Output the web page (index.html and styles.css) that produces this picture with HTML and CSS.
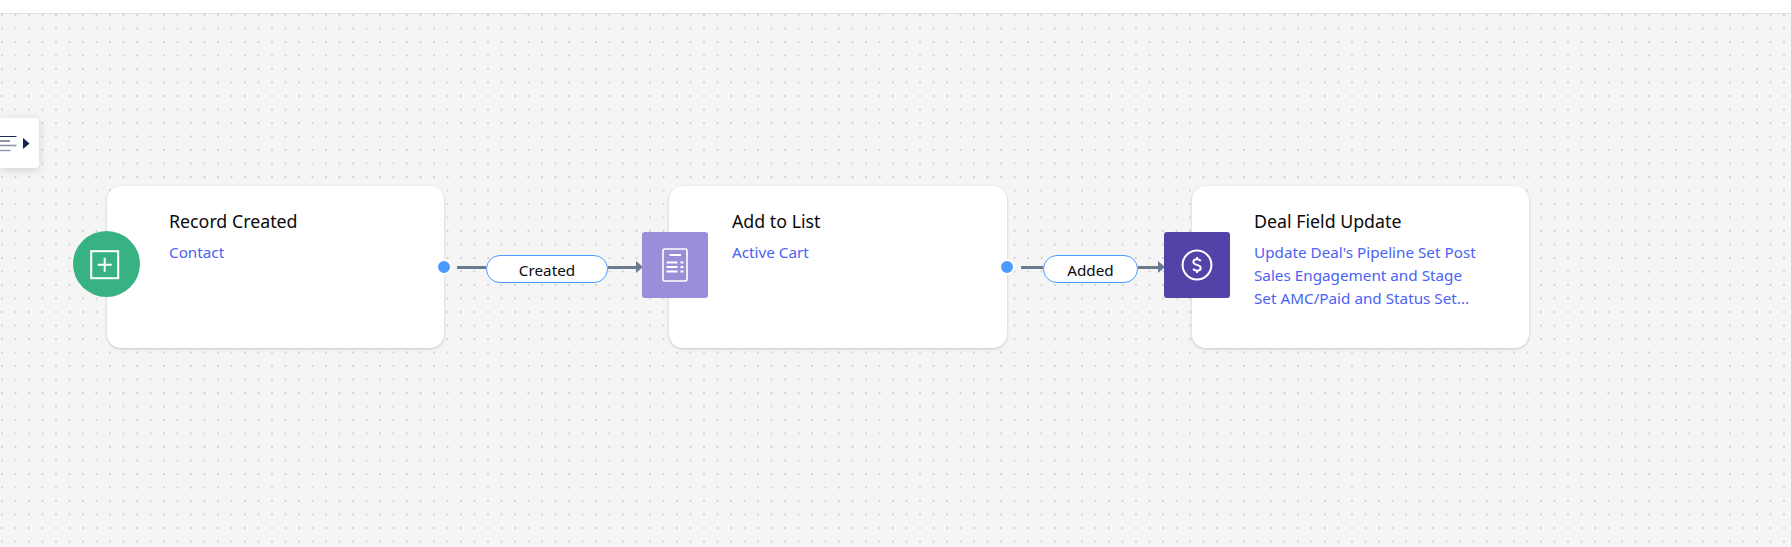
FILE: index.html
```html
<!DOCTYPE html>
<html lang="en">
<head>
<meta charset="utf-8">
<title>Workflow</title>
<link rel="stylesheet" href="styles.css">
</head>
<body>
<header class="topbar"></header>
<main class="canvas">
  <div class="toggle">
    <svg class="toggle-lines" width="17" height="18" viewBox="0 0 17 18">
      <path d="M0 1.5H16.5" stroke="#1b2a4e" stroke-width="1"/>
      <path d="M0 6H10" stroke="#1b2a4e" stroke-width="1"/>
      <path d="M0 10.5H16.5" stroke="#8c95a8" stroke-width="1.6"/>
      <path d="M0 15.5H10.5" stroke="#8c95a8" stroke-width="1.4"/>
    </svg>
    <svg class="toggle-caret" width="7" height="11" viewBox="0 0 7 11"><path d="M0 0L6.5 5.5L0 11Z" fill="#15274f"/></svg>
  </div>

  <div class="edge edge-a">
    <span class="edge-line edge-line-start"></span>
    <span class="edge-label edge-label-a">Created</span>
    <span class="edge-line"></span>
    <span class="edge-arrow"></span>
  </div>
  <div class="edge edge-b">
    <span class="edge-line edge-line-start"></span>
    <span class="edge-label edge-label-b">Added</span>
    <span class="edge-line"></span>
    <span class="edge-arrow"></span>
  </div>

  <article class="node node-a">
    <span class="badge badge-round badge-green">
      <svg class="icon-plus" width="30" height="30" viewBox="0 0 30 30" fill="none" stroke="#fff"><rect x="1.2" y="1.2" width="27" height="27" stroke-width="2"/><path d="M7.7 14.7H21.7M14.7 7.7V21.7" stroke-width="2"/></svg>
    </span>
    <h2 class="node-title">Record Created</h2>
    <p class="node-sub">Contact</p>
    <span class="handle"></span>
  </article>

  <article class="node node-b">
    <span class="badge badge-lilac">
      <svg width="26" height="34" viewBox="0 0 26 34" fill="none" stroke="#fff"><rect x="1" y="1" width="24" height="32" rx="1.5" stroke-width="1.6"/><path d="M7.5 7H19" stroke-width="2"/><path d="M4.5 14.5H15.5M4.5 19H15.5M4.5 23.5H15.5M18.5 14.5H21.5M18.5 19H21.5M18.5 23.5H21.5" stroke-width="2"/></svg>
    </span>
    <h2 class="node-title">Add to List</h2>
    <p class="node-sub">Active Cart</p>
    <span class="handle"></span>
  </article>

  <article class="node node-c">
    <span class="badge badge-violet">
      <svg width="32" height="32" viewBox="0 0 32 32" fill="none" stroke="#fff"><circle cx="16" cy="16" r="14.4" stroke-width="2"/><path d="M19.6 12.2C19.2 11 18 10.2 16 10.2C13.8 10.2 12.4 11.2 12.4 12.9C12.4 14.8 14.2 15.4 16 15.9C17.9 16.4 19.7 17 19.7 19C19.7 20.8 18.2 21.8 16 21.8C14 21.8 12.8 21 12.3 19.7M16 8V10.2M16 21.8V24" stroke-width="2"/></svg>
    </span>
    <h2 class="node-title">Deal Field Update</h2>
    <p class="node-sub">Update Deal's Pipeline Set Post<br>Sales Engagement and Stage<br>Set AMC/Paid and Status Set...</p>
  </article>
</main>
</body>
</html>
```
FILE: styles.css
```css
* { box-sizing: border-box; }
html, body { margin: 0; height: 100%; }
body {
  display: flex;
  flex-direction: column;
  background: #fff;
  overflow: hidden;
  font-family: "Noto Sans", "Open Sans", sans-serif;
}
.topbar {
  flex: none;
  height: 14px;
  background: #fff;
  border-bottom: 1px solid #dfdfdf;
}
.canvas {
  position: relative;
  flex: 1;
  background-color: #f5f5f5;
  background-image: radial-gradient(circle at center, #b8b8b8 0, rgba(184,184,184,0) 1.5px);
  background-size: 13.5px 13.5px;
  background-position: -4.75px -5.75px;
}
.toggle {
  position: absolute;
  left: 0;
  top: 104px;
  width: 39px;
  height: 50px;
  padding-top: 2px;
  display: flex;
  align-items: center;
  gap: 6px;
  background: #fff;
  border-radius: 0 4px 4px 0;
  box-shadow: 0 2px 10px rgba(0,0,0,.14);
}
.toggle-lines { display: block; }
.toggle-caret { display: block; margin-top: -1px; }
.node {
  position: absolute;
  top: 172px;
  width: 337px;
  height: 162px;
  padding: 23px 40px 0 62px;
  background: #fff;
  border-radius: 14px;
  box-shadow: 0 1px 3px rgba(0,0,0,.2);
}
.node-a { left: 107px; }
.node-b { left: 669px; width: 338px; padding-left: 63px; }
.node-c { left: 1192px; }
.node-title {
  margin: 0;
  font-size: 17.8px;
  font-weight: 400;
  line-height: 24px;
  color: #0a0a0a;
}
.node-sub {
  margin: 8px 0 0;
  font-size: 15.25px;
  line-height: 22.8px;
  color: #4a62f5;
}
.badge {
  position: absolute;
  left: -28px;
  top: 46px;
  width: 66px;
  height: 66px;
  display: flex;
  align-items: center;
  justify-content: center;
  border-radius: 3px;
}
.node-b .badge { left: -27.5px; }
.badge-round {
  left: -34px;
  top: 45px;
  width: 67px;
  border-radius: 50%;
}
.badge-green { background: #38b282; }
.badge-lilac { background: #9b8ed9; }
.badge-violet { background: #5342a8; }
.icon-plus { margin: 2px 3px 0 0; }
.handle {
  position: absolute;
  right: -8px;
  top: 73px;
  width: 16px;
  height: 16px;
  border-radius: 50%;
  background: #4a9bff;
  border: 2px solid #fff;
}
.edge {
  position: absolute;
  top: 241px;
  height: 28px;
  display: flex;
  align-items: center;
}
.edge-a { left: 457px; width: 186px; }
.edge-b { left: 1021px; width: 144px; }
.edge-line {
  flex: 1;
  height: 3px;
  margin-top: -4px;
  background: #6b7a8d;
}
.edge-a .edge-line-start { flex: none; width: 29px; }
.edge-b .edge-line-start { flex: none; width: 22px; }
.edge-label {
  flex: none;
  height: 28px;
  padding-top: 1px;
  display: flex;
  align-items: center;
  justify-content: center;
  background: #fff;
  border: 1px solid #4a9bff;
  border-radius: 14px;
  font-size: 15.25px;
  color: #0a0a0a;
}
.edge-label-a { width: 122px; }
.edge-label-b { width: 95px; }
.edge-arrow {
  flex: none;
  width: 0;
  height: 0;
  margin-top: -4px;
  border-left: 7px solid #6b7a8d;
  border-top: 6.5px solid transparent;
  border-bottom: 6.5px solid transparent;
}
```
